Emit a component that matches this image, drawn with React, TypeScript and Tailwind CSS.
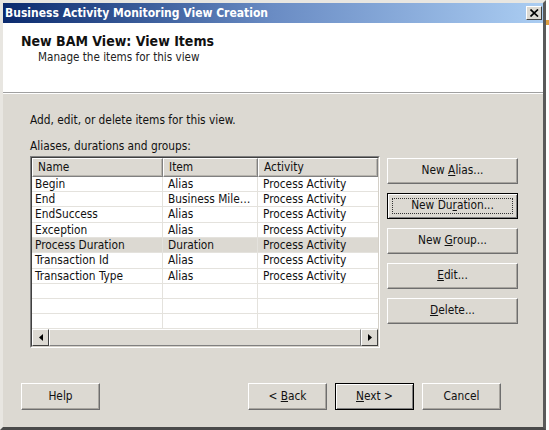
import React from "react";

const font = { fontFamily: "'DejaVu Sans Condensed', 'DejaVu Sans', 'Liberation Sans', sans-serif" };

function Btn({ children, w, h, def }: { children: React.ReactNode; w: string; h: string; def?: boolean }) {
  return (
    <div
      className={`${w} ${h} flex items-center justify-center bg-[#dcd9d2] text-[11.8px] text-[#111] ${
        def
          ? "border border-[#000] shadow-[inset_1px_1px_0_#fff,inset_-1px_-1px_0_#808080]"
          : "border border-t-white border-l-white border-b-[#6e6e6e] border-r-[#6e6e6e] shadow-[inset_-1px_-1px_0_#a8a59f]"
      }`}
    >
      {def ? (
        <div className="w-[calc(100%-8px)] h-[calc(100%-8px)] flex items-center justify-center border border-dotted border-[#333]">
          <span className="whitespace-pre">{children}</span>
        </div>
      ) : (
        <span className="whitespace-pre">{children}</span>
      )}
    </div>
  );
}

const rows = [
  ["Begin", "Alias", "Process Activity", 15],
  ["End", "Business Mile…", "Process Activity", 15],
  ["EndSuccess", "Alias", "Process Activity", 16],
  ["Exception", "Alias", "Process Activity", 15],
  ["Process Duration", "Duration", "Process Activity", 15],
  ["Transaction Id", "Alias", "Process Activity", 16],
  ["Transaction Type", "Alias", "Process Activity", 15],
  ["", "", "", 15],
  ["", "", "", 15],
  ["", "", "", 15],
] as const;

export default function App() {
  return (
    <div className="w-[549px] h-[430px] flex bg-white overflow-hidden" style={font}>
      <div className="w-[546px] h-[430px] flex flex-col bg-[#dcd9d2] border-t-[3px] border-l-[3px] border-r-[3px] border-b-[3px] border-t-[#e8e6e1] border-l-[#e8e6e1] border-r-[#5a5a5a] border-b-[#4a4a4a]">
        {/* title bar */}
        <div className="h-[20px] flex items-center justify-between bg-gradient-to-r from-[#0b2a6e] via-[#6a8cc4] to-[#abcdf2] pl-[2px] pr-[1px]">
          <span className="text-white font-bold text-[12px] leading-none">Business Activity Monitoring View Creation</span>
          <div className="w-[16px] h-[14px] flex items-center justify-center bg-[#dcd9d2] border border-t-white border-l-white border-b-[#404040] border-r-[#404040]">
            <svg width="9" height="8" viewBox="0 0 9 8">
              <path d="M0.5 0.5 L8 7.5 M8 0.5 L0.5 7.5" stroke="#000" strokeWidth="1.7" />
            </svg>
          </div>
        </div>
        {/* header */}
        <div className="h-[70px] bg-white flex flex-col pl-[18px] pt-[10px] border-b border-[#a0a0a0]">
          <div className="font-bold text-[14px] leading-[17px] text-[#111]">New BAM View: View Items</div>
          <div className="pl-[17px] text-[11.6px] leading-[14px] text-[#222]">Manage the items for this view</div>
        </div>
        <div className="h-[1px] bg-white" />
        {/* body */}
        <div className="flex-1 flex flex-col pl-[27px] pt-[19px]">
          <div className="text-[11.8px] leading-[14px] text-[#111]">Add, edit, or delete items for this view.</div>
          <div className="mt-[12px] text-[11.8px] leading-[14px] text-[#111]">Aliases, durations and groups:</div>
          <div className="mt-[3px] flex gap-[7px]">
            {/* list view */}
            <div className="w-[350px] h-[192px] flex flex-col border border-t-[#808080] border-l-[#808080] border-b-white border-r-white">
              <div className="flex-1 flex flex-col border border-t-[#404040] border-l-[#404040] border-b-[#d4d0c8] border-r-[#d4d0c8] bg-white overflow-hidden">
                <div className="h-[19px] flex shrink-0">
                  {["Name", "Item", "Activity"].map((h, i) => (
                    <div
                      key={h}
                      className={`${i === 0 ? "w-[131px]" : i === 1 ? "w-[95px]" : "w-[120px]"} h-[19px] flex items-center pl-[5px] bg-[#dcd9d2] text-[11.8px] text-[#111] border border-t-white border-l-white border-b-[#808080] border-r-[#808080] shadow-[inset_-1px_-1px_0_#b8b5ae]`}
                    >
                      {h}
                    </div>
                  ))}
                  <div className="flex-1 bg-[#dcd9d2]" />
                </div>
                <div className="flex-1 flex flex-col overflow-hidden">
                  {rows.map((r, i) => (
                    <div
                      key={i}
                      style={{ height: r[3] }}
                      className={`shrink-0 flex border-b border-[#e4e2dd] ${i === 4 ? "bg-[#dcd9d2]" : ""}`}
                    >
                      <div className="w-[131px] pl-[3px] text-[11.8px] leading-[14px] text-[#111] border-r border-[#e4e2dd] whitespace-nowrap overflow-hidden">{r[0]}</div>
                      <div className="w-[95px] pl-[5px] text-[11.8px] leading-[14px] text-[#111] border-r border-[#e4e2dd] whitespace-nowrap overflow-hidden">{r[1]}</div>
                      <div className="w-[120px] pl-[5px] text-[11.8px] leading-[14px] text-[#111] whitespace-nowrap overflow-hidden">{r[2]}</div>
                    </div>
                  ))}
                  <div className="flex-1 flex">
                    <div className="w-[131px] border-r border-[#e4e2dd]" />
                    <div className="w-[95px] border-r border-[#e4e2dd]" />
                  </div>
                </div>
                {/* scrollbar */}
                <div className="h-[17px] shrink-0 flex bg-[#ece9e4]">
                  <div className="w-[17px] h-[17px] flex items-center justify-center bg-[#dcd9d2] border border-t-white border-l-white border-b-[#404040] border-r-[#404040]">
                    <svg width="4" height="7" viewBox="0 0 4 7"><path d="M4 0 L0 3.5 L4 7Z" fill="#000" /></svg>
                  </div>
                  <div className="flex-1 bg-[#dcd9d2] border border-t-white border-l-white border-b-[#808080] border-r-[#808080]" />
                  <div className="w-[17px] h-[17px] flex items-center justify-center bg-[#dcd9d2] border border-t-white border-l-white border-b-[#404040] border-r-[#404040]">
                    <svg width="4" height="7" viewBox="0 0 4 7"><path d="M0 0 L4 3.5 L0 7Z" fill="#000" /></svg>
                  </div>
                </div>
              </div>
            </div>
            {/* right buttons */}
            <div className="pt-[2px] flex flex-col gap-[9px]">
              <Btn w="w-[131px]" h="h-[26px]">New <u>A</u>lias...</Btn>
              <Btn w="w-[131px]" h="h-[26px]" def>New Du<u>r</u>ation...</Btn>
              <Btn w="w-[131px]" h="h-[26px]">New <u>G</u>roup...</Btn>
              <Btn w="w-[131px]" h="h-[26px]"><u>E</u>dit...</Btn>
              <Btn w="w-[131px]" h="h-[26px]"><u>D</u>elete...</Btn>
            </div>
          </div>
          {/* bottom buttons */}
          <div className="mt-[35px] -ml-[9px] flex">
            <Btn w="w-[79px]" h="h-[27px]">Help</Btn>
            <div className="ml-[148px] flex gap-[8px]">
              <Btn w="w-[79px]" h="h-[27px]">&lt; <u>B</u>ack</Btn>
              <div className="w-[79px] h-[27px] flex items-center justify-center bg-[#dcd9d2] text-[11.8px] text-[#111] border border-[#000] shadow-[inset_1px_1px_0_#fff,inset_-1px_-1px_0_#808080]">
                <span className="whitespace-pre"><u>N</u>ext &gt;</span>
              </div>
              <Btn w="w-[79px]" h="h-[27px]">Cancel</Btn>
            </div>
          </div>
        </div>
      </div>
      <div className="flex-1 flex flex-col">
        <div className="h-[20px]" />
        <div className="h-[5px] bg-[#e0a040]" />
      </div>
    </div>
  );
}
